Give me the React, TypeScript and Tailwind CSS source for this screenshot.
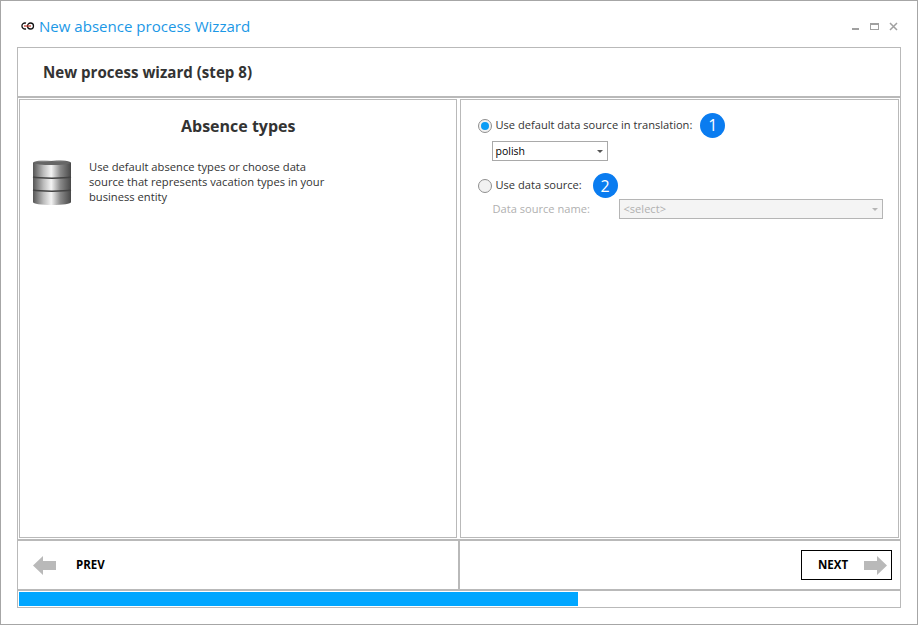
const font = "[font-family:'Open_Sans',sans-serif]";

const Badge = ({ n }: { n: number }) => (
  <span className="flex h-[25px] w-[25px] items-center justify-center rounded-full bg-[#0a7cf0] text-[16px] font-medium leading-none text-white [font-family:'Open_Sans',sans-serif]">
    {n}
  </span>
);

const Radio = ({ checked }: { checked?: boolean }) => (
  <span className="flex h-[14px] w-[14px] items-center justify-center rounded-full border border-[#8f8f8f] bg-[#f2f2f2]">
    {checked && <span className="h-[8px] w-[8px] rounded-full bg-[#0a9cf5]" />}
  </span>
);

const Caret = ({ color }: { color: string }) => (
  <svg width="6" height="3" viewBox="0 0 6 3">
    <path d="M0 0h6L3 3z" fill={color} />
  </svg>
);

const Database = () => (
  <svg width="40" height="46" viewBox="0 0 40 46">
    <defs>
      <linearGradient id="metal" x1="0" x2="1" y1="0" y2="0">
        <stop offset="0" stopColor="#555" />
        <stop offset="0.28" stopColor="#bdbdbd" />
        <stop offset="0.48" stopColor="#f4f4f4" />
        <stop offset="0.72" stopColor="#8a8a8a" />
        <stop offset="1" stopColor="#484848" />
      </linearGradient>
    </defs>
    <path d="M1 3c0-2 8-3 19-3s19 1 19 3v39c0 2-8 3-19 3S1 44 1 42z" fill="url(#metal)" />
    <ellipse cx="20" cy="3" rx="18" ry="2" fill="#666" />
    <path d="M1 17c6 1.500 32 1.500 38 0" fill="none" stroke="#444" strokeWidth="1.500" />
    <path d="M1 30c6 1.500 32 1.500 38 0" fill="none" stroke="#444" strokeWidth="1.500" />
  </svg>
);

const Arrow = ({ right }: { right?: boolean }) => (
  <svg width="23" height="19" viewBox="0 0 23 19" className={right ? "" : "-scale-x-100"}>
    <path d="M0 5h13V0l10 9.500L13 19v-5H0z" fill="#b9b9b9" />
  </svg>
);

export default function App() {
  return (
    <div className={`flex h-[625px] w-[918px] flex-col overflow-hidden border border-[#a6a6a6] bg-white ${font}`}>
      {/* Title bar */}
      <div className="flex h-[46px] shrink-0 items-center pl-[19px] pr-[19px] pt-[5px]">
        <svg width="15" height="8" viewBox="0 0 15 8" className="mr-[4px] -mt-[2px]">
          <path d="M6 1.200A3 3 0 1 0 6 6.800" fill="none" stroke="#111" strokeWidth="1.300" />
          <circle cx="10.500" cy="4" r="3" fill="none" stroke="#111" strokeWidth="1.300" />
          <path d="M4 4h7" stroke="#c0392b" strokeWidth="1.200" />
        </svg>
        <span className="text-[15.050px] text-[#1b98e6]">New absence process Wizzard</span>
        <div className="-mt-[1px] ml-auto flex items-center gap-[10px]">
          <span className="mr-[1px] mt-[5px] h-[2px] w-[7px] bg-[#a0a0a0]" />
          <span className="h-[7px] w-[9px] border border-t-2 border-[#a0a0a0]" />
          <svg width="9" height="9" viewBox="0 0 9 9">
            <path d="M1 1l7 7M8 1l-7 7" stroke="#a0a0a0" strokeWidth="1.500" />
          </svg>
        </div>
      </div>

      {/* Wizard frame */}
      <div className="ml-[16px] flex h-[561px] w-[884px] flex-col border border-[#b9b9b9]">
        <div className="flex h-[50px] shrink-0 items-center border-b-2 border-[#b9b9b9] pl-[25px] text-[15.100px] font-bold text-[#333]">
          New process wizard (step 8)
        </div>

        <div className="flex h-[443px] shrink-0 gap-[3px] border-b-2 border-[#b9b9b9] p-[1px]">
          <div className="flex w-[439px] flex-col border border-[#b9b9b9] pt-[15px]">
            <h2 className="text-center text-[16px] font-bold leading-[22px] text-[#333]">Absence types</h2>
            <div className="mt-[22px] flex pl-[12px]">
              <div className="mt-[1px]"><Database /></div>
              <p className="ml-[17px] w-[250px] text-[11.200px] leading-[15px] text-[#333]">
                Use default absence types or choose data source that represents vacation types in your business entity
              </p>
            </div>
          </div>

          <div className="flex w-[439px] flex-col border border-[#b9b9b9] pl-[17px] pt-[13px] text-[11.100px] text-[#333]">
            <div className="flex h-[25px] items-center">
              <Radio checked />
              <span className="ml-[3px]">Use default data source in translation:</span>
              <span className="ml-[8px] -mt-[1px]"><Badge n={1} /></span>
            </div>
            <div className="ml-[14px] mt-[3px] flex h-[20px] w-[116px] items-center justify-between border border-[#a9a9a9] pb-[0px] pl-[2px] pr-[4px] pt-[1px] text-[10.500px] text-black">
              polish
              <Caret color="#555" />
            </div>
            <div className="mt-[12px] flex h-[25px] items-center">
              <Radio />
              <span className="ml-[3px]">Use data source:</span>
              <span className="ml-[11px]"><Badge n={2} /></span>
            </div>
            <div className="ml-[14px] mt-[1px] flex items-center text-[#b0b0b0]">
              <span className="w-[127px]">Data source name:</span>
              <div className="flex h-[20px] w-[264px] items-center justify-between border border-[#b5b5b5] bg-[#f4f4f4] pl-[3px] pr-[4px]">
                &lt;select&gt;
                <Caret color="#b5b5b5" />
              </div>
            </div>
          </div>
        </div>

        {/* Footer buttons */}
        <div className="flex h-[50px] shrink-0 border-b-2 border-[#b9b9b9]">
          <div className="flex w-[442px] items-center border-r-2 border-[#b9b9b9] pl-[15px]">
            <Arrow />
            <span className="ml-[20px] text-[11.500px] font-bold text-black">PREV</span>
          </div>
          <div className="flex flex-1 items-center justify-end pr-[8px]">
            <button className="flex h-[30px] w-[91px] items-center border border-black pl-[16px]">
              <span className="text-[11.500px] font-bold text-black">NEXT</span>
              <span className="ml-[16px] flex"><Arrow right /></span>
            </button>
          </div>
        </div>

        {/* Progress */}
        <div className="flex-1 p-[1px]">
          <div className="h-[14px] w-[559px] bg-[#00a6ff]" />
        </div>
      </div>
    </div>
  );
}
